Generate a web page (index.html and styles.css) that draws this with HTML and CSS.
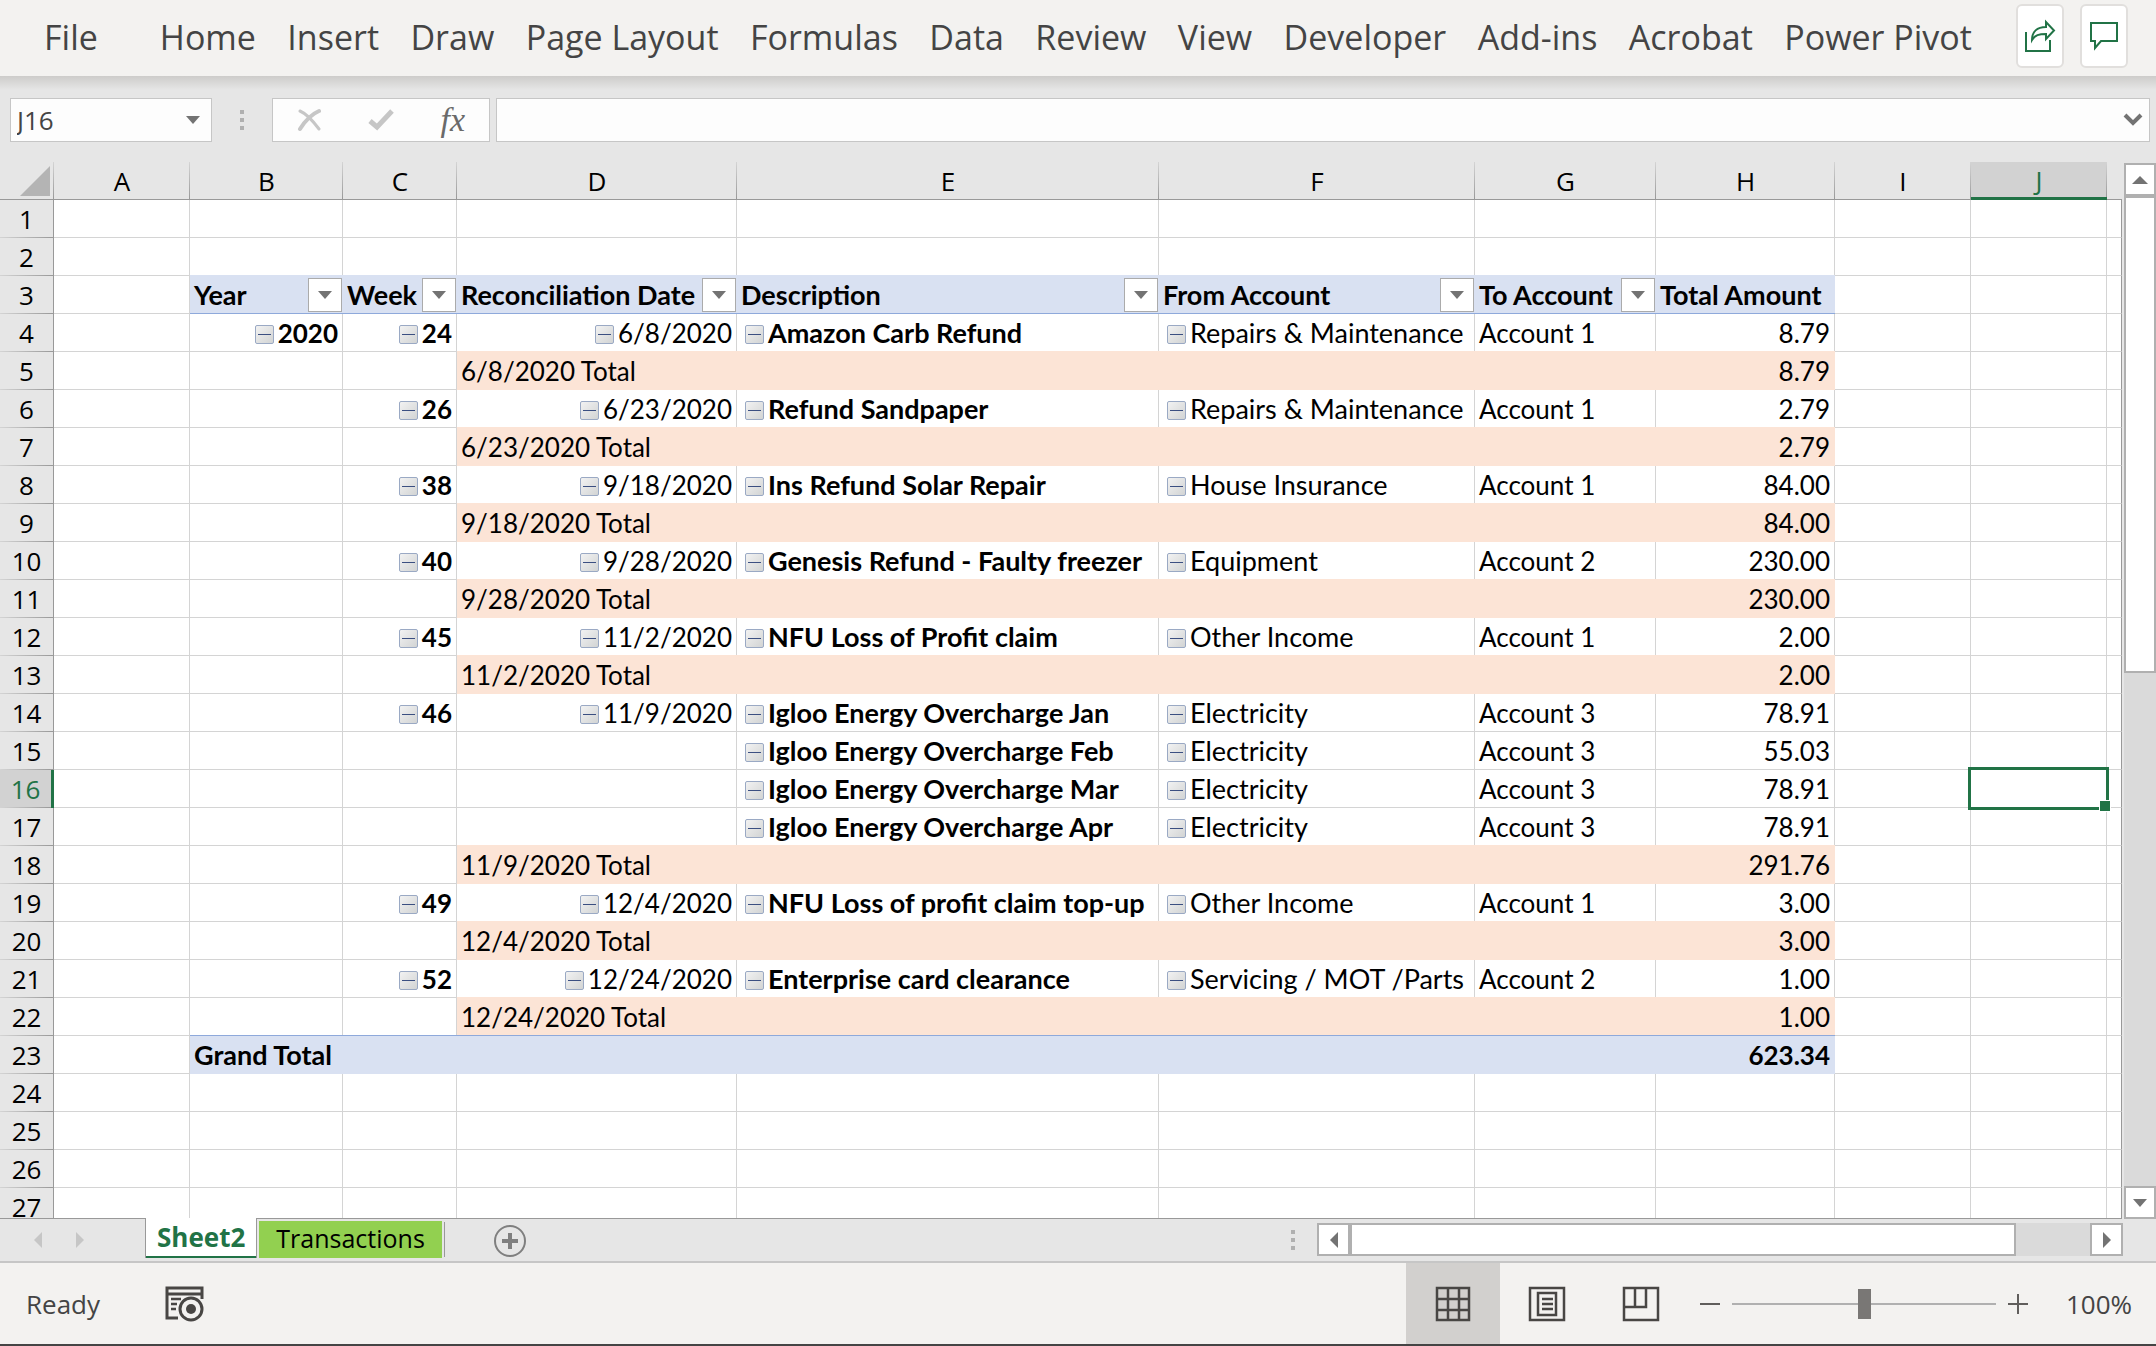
FILE: index.html
```html
<!DOCTYPE html>
<html lang="en">
<head>
    <meta charset="UTF-8">
    <meta name="viewport" content="width=device-width, initial-scale=1.0">
    <title>Reconciliation - Sheet2</title>
    <link rel="stylesheet" href="styles.css">
</head>
<body>

<!-- Ribbon tabs -->
<header class="ribbon">
    <button class="ribbon-tab file-tab">File</button>
    <nav class="ribbon-tabs">
        <button class="ribbon-tab">Home</button>
        <button class="ribbon-tab">Insert</button>
        <button class="ribbon-tab">Draw</button>
        <button class="ribbon-tab">Page Layout</button>
        <button class="ribbon-tab">Formulas</button>
        <button class="ribbon-tab">Data</button>
        <button class="ribbon-tab">Review</button>
        <button class="ribbon-tab">View</button>
        <button class="ribbon-tab">Developer</button>
        <button class="ribbon-tab">Add-ins</button>
        <button class="ribbon-tab">Acrobat</button>
        <button class="ribbon-tab">Power Pivot</button>
    </nav>
    <button class="ribbon-btn" aria-label="Share">
        <svg width="32" height="34" viewBox="0 0 32 34" fill="none" stroke="#217346" stroke-width="2">
            <path d="M2 13V32H26V21"/>
            <path d="M8 21C8 13 13 8 22 8V3L30 11.500L22 20V15C15 15 11 16 8 21Z"/>
        </svg>
    </button>
    <button class="ribbon-btn" aria-label="Comments">
        <svg width="32" height="34" viewBox="0 0 32 34" fill="none" stroke="#217346" stroke-width="2">
            <path d="M3 4H29V22H13L7 29V22H3Z"/>
        </svg>
    </button>
</header>

<!-- Formula bar -->
<div class="formula-bar">
    <div class="name-box">
        <input type="text" class="name-input" value="J16" aria-label="Name Box">
        <button class="name-arrow" aria-label="Open name list"><span class="arrow-down"></span></button>
    </div>
    <div class="dots"><i></i><i></i><i></i></div>
    <div class="formula-actions">
        <button aria-label="Cancel">
            <svg width="24" height="24" viewBox="0 0 24 24" fill="none" stroke="#c6c6c6" stroke-linecap="round">
                <path d="M3 3C10 6 16 13 22 21" stroke-width="3"/>
                <path d="M22 3C15 6 8 13 3 21" stroke-width="4"/>
            </svg>
        </button>
        <button aria-label="Enter">
            <svg width="28" height="24" viewBox="0 0 28 24" fill="none" stroke="#c6c6c6" stroke-width="5">
                <path d="M3 13L10 19L25 3"/>
            </svg>
        </button>
        <button class="fx" aria-label="Insert Function">fx</button>
    </div>
    <div class="formula-box">
        <input type="text" class="formula-input" aria-label="Formula">
        <button class="formula-expand" aria-label="Expand">
            <svg width="20" height="14" viewBox="0 0 20 14" fill="none" stroke="#737373" stroke-width="4">
                <path d="M2 2L10 10L18 2"/>
            </svg>
        </button>
    </div>
</div>

<!-- Grid -->
<main class="workspace">
    <div class="sheet">
        <table class="grid">
            <colgroup>
                <col class="col-head"><col class="col-a"><col class="col-b"><col class="col-c"><col class="col-d">
                <col class="col-e"><col class="col-f"><col class="col-g"><col class="col-h"><col class="col-i"><col class="col-j"><col>
            </colgroup>
            <thead>
                <tr>
                    <th class="corner"><svg width="30" height="30" viewBox="0 0 30 30"><path d="M30 0V30H0Z" fill="#b4b4b4"/></svg></th>
                    <th>A</th><th>B</th><th>C</th><th>D</th><th>E</th><th>F</th><th>G</th><th>H</th><th>I</th>
                    <th class="active">J</th><th class="edge"></th>
                </tr>
            </thead>
            <tbody id="grid-body"></tbody>
        </table>
    </div>
    <div class="v-scroll">
        <button aria-label="Scroll up"><span class="arrow-up"></span></button>
        <div class="v-thumb"></div>
        <div class="v-track"></div>
        <button aria-label="Scroll down"><span class="arrow-down"></span></button>
    </div>
</main>

<!-- Sheet tabs -->
<div class="tab-bar">
    <button class="tab-nav" aria-label="Previous sheet"><span class="arrow-left"></span></button>
    <button class="tab-nav" aria-label="Next sheet"><span class="arrow-right"></span></button>
    <button class="sheet-tab current">Sheet2</button>
    <button class="sheet-tab green">Transactions</button>
    <span class="tab-divider"></span>
    <button class="add-sheet" aria-label="New sheet">
        <svg width="32" height="32" viewBox="0 0 32 32" fill="none" stroke="#7f7f7f">
            <circle cx="16" cy="16" r="15" stroke-width="2"/>
            <path d="M16 8V24M8 16H24" stroke-width="4"/>
        </svg>
    </button>
    <div class="dots tab-dots"><i></i><i></i><i></i></div>
    <div class="h-scroll">
        <button aria-label="Scroll left"><span class="arrow-left"></span></button>
        <div class="h-thumb"></div>
        <div class="h-track"></div>
        <button aria-label="Scroll right"><span class="arrow-right"></span></button>
    </div>
</div>

<!-- Status bar -->
<footer class="status-bar">
    <span class="status-text">Ready</span>
    <button class="macro-btn" aria-label="Record Macro">
        <svg width="40" height="36" viewBox="0 0 40 36" fill="none" stroke="#484644">
            <path d="M14 32H3V2H38V13M3 8H38" stroke-width="3"/>
            <path d="M7 13H17M7 18H13M7 23H12" stroke-width="2.500"/>
            <circle cx="27" cy="23" r="11" stroke-width="3"/>
            <circle cx="27" cy="23" r="5" fill="#484644" stroke="none"/>
        </svg>
    </button>
    <div class="views">
        <button class="view-btn selected" aria-label="Normal">
            <svg width="36" height="36" viewBox="0 0 36 36" fill="none" stroke="#484644" stroke-width="2.500">
                <path d="M2 2H34V34H2ZM13 2V34M24 2V34M2 13H34M2 24H34"/>
            </svg>
        </button>
        <button class="view-btn" aria-label="Page Layout view">
            <svg width="38" height="36" viewBox="0 0 38 36" fill="none" stroke="#484644" stroke-width="2.500">
                <path d="M2 2H36V34H2ZM10 7H28V29H10ZM14 13H25M14 18H25M14 23H25"/>
            </svg>
        </button>
        <button class="view-btn" aria-label="Page Break Preview">
            <svg width="38" height="36" viewBox="0 0 38 36" fill="none" stroke="#484644" stroke-width="2.500">
                <path d="M2 2H36V34H2ZM13 2V21M2 21H24V2"/>
            </svg>
        </button>
    </div>
    <div class="zoom">
        <button class="zoom-btn" aria-label="Zoom out">
            <svg width="20" height="20" viewBox="0 0 20 20" stroke="#605e5c" stroke-width="2"><path d="M0 10H20"/></svg>
        </button>
        <input type="range" class="zoom-slider" min="0" max="200" value="100" aria-label="Zoom">
        <button class="zoom-btn" aria-label="Zoom in">
            <svg width="20" height="20" viewBox="0 0 20 20" stroke="#605e5c" stroke-width="2"><path d="M0 10H20M10 0V20"/></svg>
        </button>
    </div>
    <button class="zoom-level">100%</button>
</footer>

<script>
    const headers = ['Year', 'Week', 'Reconciliation Date', 'Description', 'From Account', 'To Account', 'Total Amount'];

    // [year, week, date, description, from, to, amount], totals are [label, amount]
    const rows = [
        ['2020', '24', '6/8/2020', 'Amazon Carb Refund', 'Repairs & Maintenance', 'Account 1', '8.79'],
        ['6/8/2020 Total', '8.79'],
        ['', '26', '6/23/2020', 'Refund Sandpaper', 'Repairs & Maintenance', 'Account 1', '2.79'],
        ['6/23/2020 Total', '2.79'],
        ['', '38', '9/18/2020', 'Ins Refund Solar Repair', 'House Insurance', 'Account 1', '84.00'],
        ['9/18/2020 Total', '84.00'],
        ['', '40', '9/28/2020', 'Genesis Refund - Faulty freezer', 'Equipment', 'Account 2', '230.00'],
        ['9/28/2020 Total', '230.00'],
        ['', '45', '11/2/2020', 'NFU Loss of Profit claim', 'Other Income', 'Account 1', '2.00'],
        ['11/2/2020 Total', '2.00'],
        ['', '46', '11/9/2020', 'Igloo Energy Overcharge Jan', 'Electricity', 'Account 3', '78.91'],
        ['', '', '', 'Igloo Energy Overcharge Feb', 'Electricity', 'Account 3', '55.03'],
        ['', '', '', 'Igloo Energy Overcharge Mar', 'Electricity', 'Account 3', '78.91'],
        ['', '', '', 'Igloo Energy Overcharge Apr', 'Electricity', 'Account 3', '78.91'],
        ['11/9/2020 Total', '291.76'],
        ['', '49', '12/4/2020', 'NFU Loss of profit claim top-up', 'Other Income', 'Account 1', '3.00'],
        ['12/4/2020 Total', '3.00'],
        ['', '52', '12/24/2020', 'Enterprise card clearance', 'Servicing / MOT /Parts', 'Account 2', '1.00'],
        ['12/24/2020 Total', '1.00']
    ];

    const classes = ['num bold', 'num bold', 'num', 'item bold', 'item', '', 'num'];
    const toggle = '<button class="toggle" aria-label="Collapse"></button>';
    const filter = '<button class="filter" aria-label="Filter"><span class="arrow-down"></span></button>';

    function dataCells(row) {
        return row.map(function(text, i) {
            const value = text.replace('&', '&amp;');
            const icon = text && i < 5 ? toggle : '';
            return `<td class="${classes[i]}">${icon}${value}</td>`;
        }).join('');
    }

    function headerCells() {
        return headers.map(function(text, i) {
            return `<td class="pivot-head"><div class="head-cell">${text}${i < 6 ? filter : ''}</div></td>`;
        }).join('');
    }

    let html = '';
    for (let n = 1; n <= 27; n++) {
        const active = n === 16;
        const row = rows[n - 4];
        let cells = '<td></td>'.repeat(7);
        if (n === 3) {
            cells = headerCells();
        } else if (n === 23) {
            cells = '<td class="grand grand-label" colspan="6">Grand Total</td><td class="grand num">623.34</td>';
        } else if (row && row.length === 2) {
            cells = `<td></td><td></td><td class="total" colspan="4">${row[0]}</td><td class="total num">${row[1]}</td>`;
        } else if (row) {
            cells = dataCells(row);
        }
        html += `<tr><th class="${active ? 'active' : ''}">${n}</th><td></td>${cells}<td></td>` +
            `<td class="${active ? 'selected-cell' : ''}"></td><td class="edge"></td></tr>`;
    }
    document.getElementById('grid-body').innerHTML = html;
</script>

</body>
</html>
```
FILE: styles.css
```css
* {
    box-sizing: border-box;
}
body {
    margin: 0;
    height: 100vh;
    display: flex;
    flex-direction: column;
    overflow: hidden;
    background-color: #e6e6e6;
    font-family: "Open Sans", "Noto Sans", sans-serif;
    font-size: 26px;
    color: #444;
}
button, input {
    font: inherit;
    color: inherit;
    border: none;
    padding: 0;
    margin: 0;
    background: none;
}
button {
    display: flex;
    align-items: center;
    justify-content: center;
}
svg {
    display: block;
}

/* Ribbon */
.ribbon {
    display: flex;
    align-items: center;
    height: 76px;
    padding: 0 28px 4px 44px;
    background-color: #f3f2f0;
    flex-shrink: 0;
}
.ribbon-tabs {
    flex: 1;
    display: flex;
    justify-content: space-between;
    margin: 0 44px 0 62px;
}
.ribbon-tab {
    padding-top: 2px;
    font-size: 34px;
    line-height: 48px;
    white-space: nowrap;
}
.ribbon-btn {
    width: 48px;
    height: 64px;
    background-color: #fff;
    border: 2px solid #e1dfdd;
    border-radius: 6px;
}
.ribbon-btn + .ribbon-btn {
    margin-left: 16px;
}

/* Formula bar */
.formula-bar {
    display: flex;
    height: 86px;
    padding: 22px 6px 20px 10px;
    background: linear-gradient(#cdccca, #e6e6e6 14px);
    flex-shrink: 0;
}
.name-box, .formula-actions, .formula-box {
    display: flex;
    align-items: center;
    background-color: #fdfdfd;
    border: 1px solid #c6c6c6;
}
.name-box {
    width: 202px;
}
.name-input {
    flex: 1;
    min-width: 0;
    padding-left: 6px;
}
.name-arrow {
    width: 36px;
    height: 40px;
}
.dots {
    display: flex;
    flex-direction: column;
    justify-content: center;
    gap: 4px;
    width: 4px;
    margin: 0 28px;
}
.dots i {
    width: 4px;
    height: 4px;
    background-color: #b0b0b0;
}
.formula-actions {
    width: 218px;
    justify-content: space-between;
    padding: 0 24px;
}
.fx {
    font-family: "Liberation Serif", serif;
    font-style: italic;
    font-size: 34px;
    line-height: 36px;
    color: #6a6a6a;
}
.formula-box {
    flex: 1;
    margin-left: 6px;
}
.formula-input {
    flex: 1;
    padding: 0 8px;
}
.formula-expand {
    width: 32px;
    height: 40px;
}

/* Arrows */
.arrow-down, .arrow-up, .arrow-left, .arrow-right {
    border: 8px solid transparent;
}
.arrow-down {
    border-width: 8px 7px 0;
    border-top-color: #737373;
}
.arrow-up {
    border-width: 0 8px 8px;
    border-bottom-color: #737373;
}
.arrow-left {
    border-width: 8px 8px 8px 0;
    border-right-color: #737373;
}
.arrow-right {
    border-width: 8px 0 8px 8px;
    border-left-color: #737373;
}

/* Grid */
.workspace {
    flex: 1;
    min-height: 0;
    display: flex;
    gap: 2px;
}
.sheet {
    flex: 1;
    min-width: 0;
    overflow: hidden;
    border-bottom: 1px solid #999;
}
.grid {
    table-layout: fixed;
    width: 100%;
    border-collapse: separate;
    border-spacing: 0;
    font-family: Lato, "Open Sans", sans-serif;
    font-size: 26px;
    color: #000;
}
.col-head { width: 54px; }
.col-a, .col-i, .col-j { width: 136px; }
.col-b { width: 153px; }
.col-c { width: 114px; }
.col-d { width: 280px; }
.col-e { width: 422px; }
.col-f { width: 316px; }
.col-g { width: 181px; }
.col-h { width: 179px; }
.grid th, .grid td {
    height: 38px;
    padding: 0 4px;
    line-height: 36px;
    white-space: nowrap;
}
.grid th {
    font-family: "Open Sans", "Noto Sans", sans-serif;
    font-weight: normal;
    text-align: center;
}
.grid thead th {
    background: linear-gradient(#d4d4d4, #999) right / 1px 100% no-repeat;
    border-bottom: 1px solid #999;
}
.grid thead .corner {
    padding: 0;
}
.corner svg {
    margin-left: 20px;
}
.grid thead .active {
    color: #217346;
    background-color: #d2d2d2;
    border-bottom: 3px solid #217346;
    line-height: 34px;
}
.grid thead .edge {
    background: none;
}
.grid tbody th {
    background: linear-gradient(90deg, #d4d4d4, #999) bottom / 100% 1px no-repeat;
    border-right: 1px solid #999;
}
.grid tbody .active {
    color: #217346;
    background-color: #d2d2d2;
    border-right: 3px solid #217346;
}
.grid td {
    background-color: #fff;
    border-right: 1px solid #d4d4d4;
    border-bottom: 1px solid #d4d4d4;
}
.grid td.edge {
    border-right-color: #999;
}
.grid .num {
    text-align: right;
}
.grid .item {
    padding-left: 8px;
    font-size: 27px;
}
.grid .bold {
    font-weight: bold;
}
.grid .pivot-head {
    padding: 0 1px 0 4px;
    background-color: #d9e1f2;
    border-right: none;
    border-bottom-color: #8ea9db;
    box-shadow: 0 -1px #d9e1f2;
    font-size: 27px;
    font-weight: bold;
}
.head-cell {
    display: flex;
    align-items: center;
    justify-content: space-between;
}
.filter {
    flex-shrink: 0;
    width: 34px;
    height: 34px;
    background-color: #fff;
    border: 1px solid #ababab;
}
.grid .total {
    background-color: #fce4d6;
    border-color: #fce4d6;
    box-shadow: 0 -1px #fce4d6;
}
.grid .grand {
    background-color: #d9e1f2;
    border-color: #d9e1f2;
    box-shadow: 0 -1px #8ea9db;
    font-weight: bold;
}
.grid .grand-label {
    font-size: 27px;
}
.toggle {
    display: inline-block;
    width: 19px;
    height: 19px;
    margin-right: 4px;
    vertical-align: baseline;
    border: 1px solid #9aa9c4;
    border-radius: 2px;
    background: linear-gradient(#3b4f81, #3b4f81) center / 13px 1px no-repeat, linear-gradient(135deg, #f2f2f2, #d2d4d4);
}
.selected-cell {
    position: relative;
}
.selected-cell::before {
    content: "";
    position: absolute;
    inset: -3px;
    border: 3px solid #217346;
}
.selected-cell::after {
    content: "";
    position: absolute;
    right: -5px;
    bottom: -5px;
    width: 10px;
    height: 10px;
    background-color: #217346;
    border: 1px solid #fff;
}

/* Scroll bars */
.v-scroll {
    width: 32px;
    display: flex;
    flex-direction: column;
    padding-top: 1px;
}
.v-scroll button, .h-scroll button {
    flex-shrink: 0;
    width: 33px;
    height: 33px;
    background-color: #fff;
    border: 2px solid #b0b0b0;
}
.v-scroll button {
    width: 32px;
}
.v-thumb, .h-thumb {
    background-color: #fff;
    border: 2px solid #b0b0b0;
}
.v-thumb {
    flex: 474;
}
.v-track {
    flex: 515;
    background-color: #dadada;
}

/* Sheet tabs */
.tab-bar {
    display: flex;
    height: 44px;
    padding-left: 17px;
    border-bottom: 2px solid #c6c6c6;
    flex-shrink: 0;
}
.tab-nav {
    width: 42px;
    height: 42px;
}
.tab-nav .arrow-left {
    border-right-color: #c6c6c6;
}
.tab-nav .arrow-right {
    border-left-color: #c6c6c6;
}
.sheet-tab {
    height: 37px;
    padding: 0 17px 4px;
    margin-top: 2px;
    font-size: 25px;
    line-height: 32px;
    color: #000;
    white-space: nowrap;
}
.sheet-tab.current {
    height: 40px;
    margin: -1px 2px 0 44px;
    padding: 0 11px 2px;
    background-color: #fff;
    border: solid #999;
    border-width: 0 1px;
    box-shadow: inset 0 -2px #217346;
    color: #217346;
    font-size: 26px;
    font-weight: bold;
}
.sheet-tab.green {
    background-color: #92d050;
}
.tab-divider {
    width: 1px;
    height: 35px;
    margin: 3px 49px 0 2px;
    background-color: #999;
}
.add-sheet {
    height: 44px;
}
.tab-dots {
    margin: 0 22px 0 auto;
}
.h-scroll {
    display: flex;
    width: 806px;
    margin: 4px 33px 0 0;
}
.h-thumb {
    flex: 666;
    height: 33px;
}
.h-track {
    flex: 74;
    height: 33px;
    background-color: #dadada;
}

/* Status bar */
.status-bar {
    display: flex;
    align-items: center;
    height: 83px;
    padding-left: 26px;
    background-color: #f3f2f0;
    border-bottom: 2px solid #444;
    flex-shrink: 0;
}
.macro-btn {
    margin-left: 64px;
}
.views {
    display: flex;
    align-self: stretch;
    margin-left: auto;
}
.view-btn {
    width: 94px;
}
.view-btn.selected {
    background-color: #d2d0ce;
}
.zoom {
    display: flex;
    align-items: center;
    gap: 12px;
    margin-left: 12px;
}
.zoom-slider {
    appearance: none;
    width: 264px;
    height: 30px;
}
.zoom-slider::-webkit-slider-runnable-track {
    height: 30px;
    background: linear-gradient(#b0b0b0, #b0b0b0) center / 100% 2px no-repeat;
}
.zoom-slider::-webkit-slider-thumb {
    appearance: none;
    width: 13px;
    height: 30px;
    background-color: #797775;
}
.zoom-level {
    width: 128px;
    padding-left: 14px;
}
```
